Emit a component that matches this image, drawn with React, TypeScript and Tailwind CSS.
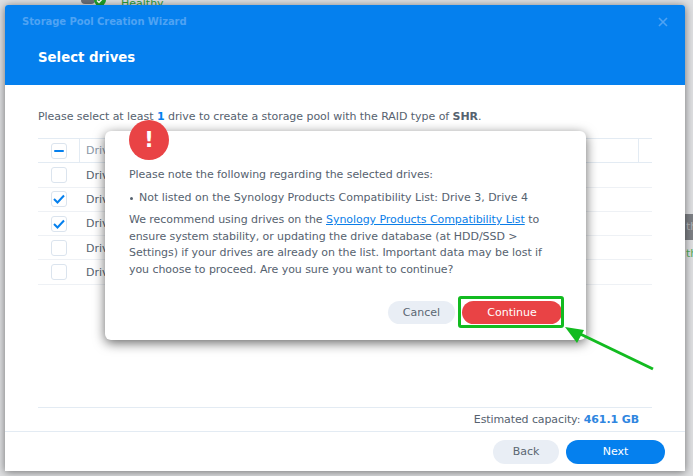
const font = "font-['DejaVu_Sans','Verdana',sans-serif]";

function Box({ state }: { state?: "checked" | "mixed" }) {
  return (
    <span className="flex h-[16px] w-[16px] items-center justify-center rounded-[3px] border border-[#dbe4ee] bg-white">
      {state === "mixed" && <span className="h-[2px] w-[10px] rounded bg-[#0580ee]" />}
      {state === "checked" && (
        <svg width="12" height="10" viewBox="0 0 12 10" fill="none">
          <path d="M1 5l3.5 3.5L11 1.5" stroke="#0580ee" strokeWidth="2" />
        </svg>
      )}
    </span>
  );
}

function Row({ state, header }: { state?: "checked" | "mixed"; header?: boolean }) {
  return (
    <div className={`flex h-[24.3px] items-center border-b ${header ? "border-[#e3ebf3]" : "border-[#eef1f5]"}`}>
      <div className={`flex h-full w-[42px] items-center pl-[13px] ${header ? "border-r border-[#e3ebf3]" : ""}`}>
        <Box state={state} />
      </div>
      <div className={`flex-1 pl-[6px] pt-[2px] text-[11px] ${header ? "text-[#8a97a6]" : "text-[#56626f]"}`}>Drive</div>
      {header && <div className="h-full w-[14px] border-l border-[#e3ebf3]" />}
    </div>
  );
}

export default function App() {
  return (
    <div className={`${font} relative h-[476px] w-[693px] overflow-hidden bg-[#dfe0e2]`}>
      <div className="absolute right-0 top-[214px] flex h-[26px] w-[8px] items-center overflow-hidden bg-[#7d8085] pl-[1px] text-[11px] text-[#b5b7ba]">th</div>
      <div className="absolute right-0 top-[247px] w-[8px] overflow-hidden pl-[1px] text-[11px] leading-[14px] text-[#4fae5a]">th</div>
      <div className="absolute left-[81px] top-0 h-[4px] w-[14px] rounded-b-sm bg-[#6b7078]" />
      <div className="absolute left-[94px] top-[-6px] flex h-[12px] w-[12px] items-center justify-center rounded-full bg-[#1fa32a]">
        <svg width="8" height="7" viewBox="0 0 8 7" fill="none"><path d="M1 3.5l2 2L7 1" stroke="#ffffff" strokeWidth="1.5" /></svg>
      </div>
      <div className="absolute left-[121px] top-[-3px] text-[11px] leading-[14px] text-[#2f9e3a]">Healthy</div>

      <div className="absolute left-[5px] top-[5px] flex h-[466px] w-[680px] flex-col overflow-hidden rounded-t-[3px] bg-white shadow-[0_1px_9px_rgba(0,0,0,0.5)]">
        <div className="h-[80px] shrink-0 bg-[#0580ee] pl-[17px] pt-[10px]">
          <div className="flex items-center justify-between pr-[17px]">
            <span className="text-[10px] font-bold leading-[14px] tracking-[-0.07px] text-[#4fa3f3]">Storage Pool Creation Wizard</span>
            <svg width="10" height="10" viewBox="0 0 10 10"><path d="M1 1l8 8M9 1l-8 8" stroke="#4fa3f3" strokeWidth="1.6" /></svg>
          </div>
          <div className="ml-[16px] mt-[19px] text-[13.3px] font-bold leading-[20px] text-white">Select drives</div>
        </div>

        <div className="flex min-h-0 flex-1 flex-col pl-[33px] pr-[33px]">
          <p className="mt-[25px] text-[11px] leading-[14px] tracking-[-0.05px] text-[#56626f]">
            Please select at least <b className="text-[#0580ee]">1</b> drive to create a storage pool with the RAID type of <b>SHR</b>.
          </p>
          <div className="mt-[14px] border-t border-[#e3ebf3]">
            <Row header state="mixed" />
            <Row />
            <Row state="checked" />
            <Row state="checked" />
            <Row />
            <Row />
          </div>
          <div className="mt-auto flex h-[24px] items-center justify-end border-t border-[#e3ebf3] pr-[13px] pt-[1px] text-[11px] tracking-[-0.1px] text-[#56626f]">
            Estimated capacity:&nbsp;<b className="text-[#2f86e0]">461.1 GB</b>
          </div>
        </div>

        <div className="flex h-[40px] shrink-0 items-center justify-end gap-[7px] border-t border-[#e3ebf3] pr-[20px]">
          <button className="h-[24px] w-[66px] rounded-full bg-[#e9eef5] pt-[1px] text-[11px] text-[#5a6672]">Back</button>
          <button className="h-[24px] w-[99px] rounded-full bg-[#0580ee] pt-[1px] text-[11px] font-medium text-white">Next</button>
        </div>
      </div>

      <div className="absolute left-[105px] top-[131px] flex h-[209px] w-[481px] flex-col rounded-[6px] bg-white px-[24px] pt-[36px] text-[#56626f] shadow-[0_3px_12px_rgba(0,0,0,0.6)]">
        <div className="absolute left-[24px] top-[-11px] flex h-[40px] w-[40px] items-center justify-center rounded-full bg-[#e94345] text-[21px] font-bold leading-none text-white">!</div>
        <p className="text-[11px] leading-[16px] tracking-[-0.06px]">Please note the following regarding the selected drives:</p>
        <div className="mt-[7px] flex items-center text-[11px] leading-[16px] tracking-[-0.01px]">
          <span className="ml-px mr-[6px] h-[3px] w-[3px] rounded-full bg-[#56626f]" />
          <span>Not listed on the Synology Products Compatibility List: Drive 3, Drive 4</span>
        </div>
        <p className="mt-[6px] text-[11px] leading-[16.7px] tracking-[-0.06px]">
          We recommend using drives on the <a className="text-[#0a7ee8] underline">Synology Products Compatibility List</a> to ensure system stability, or updating the drive database (at HDD/SSD &gt; Settings) if your drives are already on the list. Important data may be lost if you choose to proceed. Are you sure you want to continue?
        </p>
        <div className="absolute right-[24px] top-[170px] flex items-center gap-[7px]">
          <button className="h-[23px] w-[67px] rounded-full bg-[#e9eef5] pt-[1px] text-[11px] text-[#5a6672]">Cancel</button>
          <button className="h-[23px] w-[100px] rounded-full bg-[#e94345] pt-[1px] text-[11px] font-medium text-white">Continue</button>
        </div>
      </div>

      <div className="absolute left-[458px] top-[296px] h-[32px] w-[106px] rounded-[3px] border-[3px] border-[#12bb20]" />
      <svg className="absolute left-0 top-0" width="693" height="476" fill="none">
        <path d="M653 369L574 331" stroke="#12bb20" strokeWidth="3" />
        <path d="M565 327L584 330L577 343Z" fill="#12bb20" />
      </svg>
    </div>
  );
}
